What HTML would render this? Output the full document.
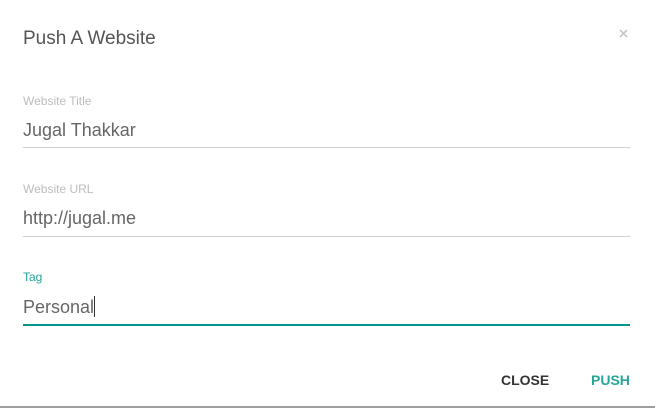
<!DOCTYPE html>
<html><head><meta charset="utf-8"><style>
*{margin:0;padding:0;box-sizing:border-box}
html,body{width:655px;height:408px;overflow:hidden;background:#fff;font-family:"Liberation Sans",sans-serif}
.a{position:absolute;white-space:nowrap}
.lbl{font-size:12px;color:#bdbdbd;left:23px}
.val{font-size:18px;color:#666;left:23px}
.line{position:absolute;left:23px;width:607px;height:1px;background:#d0d0d0}
</style></head><body>
<div class="a" style="left:23px;top:28px;font-size:19px;color:#555">Push A Website</div>
<svg class="a" style="left:619px;top:29px" width="9" height="9" viewBox="0 0 9 9"><path d="M1 1L8 8M8 1L1 8" stroke="#c8c8c8" stroke-width="1.6"/></svg>

<div class="a lbl" style="top:94px">Website Title</div>
<div class="a val" style="top:120px">Jugal Thakkar</div>
<div class="line" style="top:147px"></div>

<div class="a lbl" style="top:182px">Website URL</div>
<div class="a val" style="top:208px">http://jugal.me</div>
<div class="line" style="top:236px"></div>

<div class="a lbl" style="top:270px;color:#26a69a">Tag</div>
<div class="a val" style="top:296px">Personal<span style="display:inline-block;width:1px;height:21px;background:#333;vertical-align:-4px"></span></div>
<div class="line" style="top:324px;height:2px;background:#009688"></div>

<div class="a" style="left:501px;top:372px;font-size:14px;font-weight:bold;color:#333">CLOSE</div>
<div class="a" style="left:591px;top:372px;font-size:14px;font-weight:bold;color:#26a69a">PUSH</div>
<div style="position:absolute;left:0;top:406px;width:655px;height:2px;background:#9e9e9e"></div>
</body></html>
